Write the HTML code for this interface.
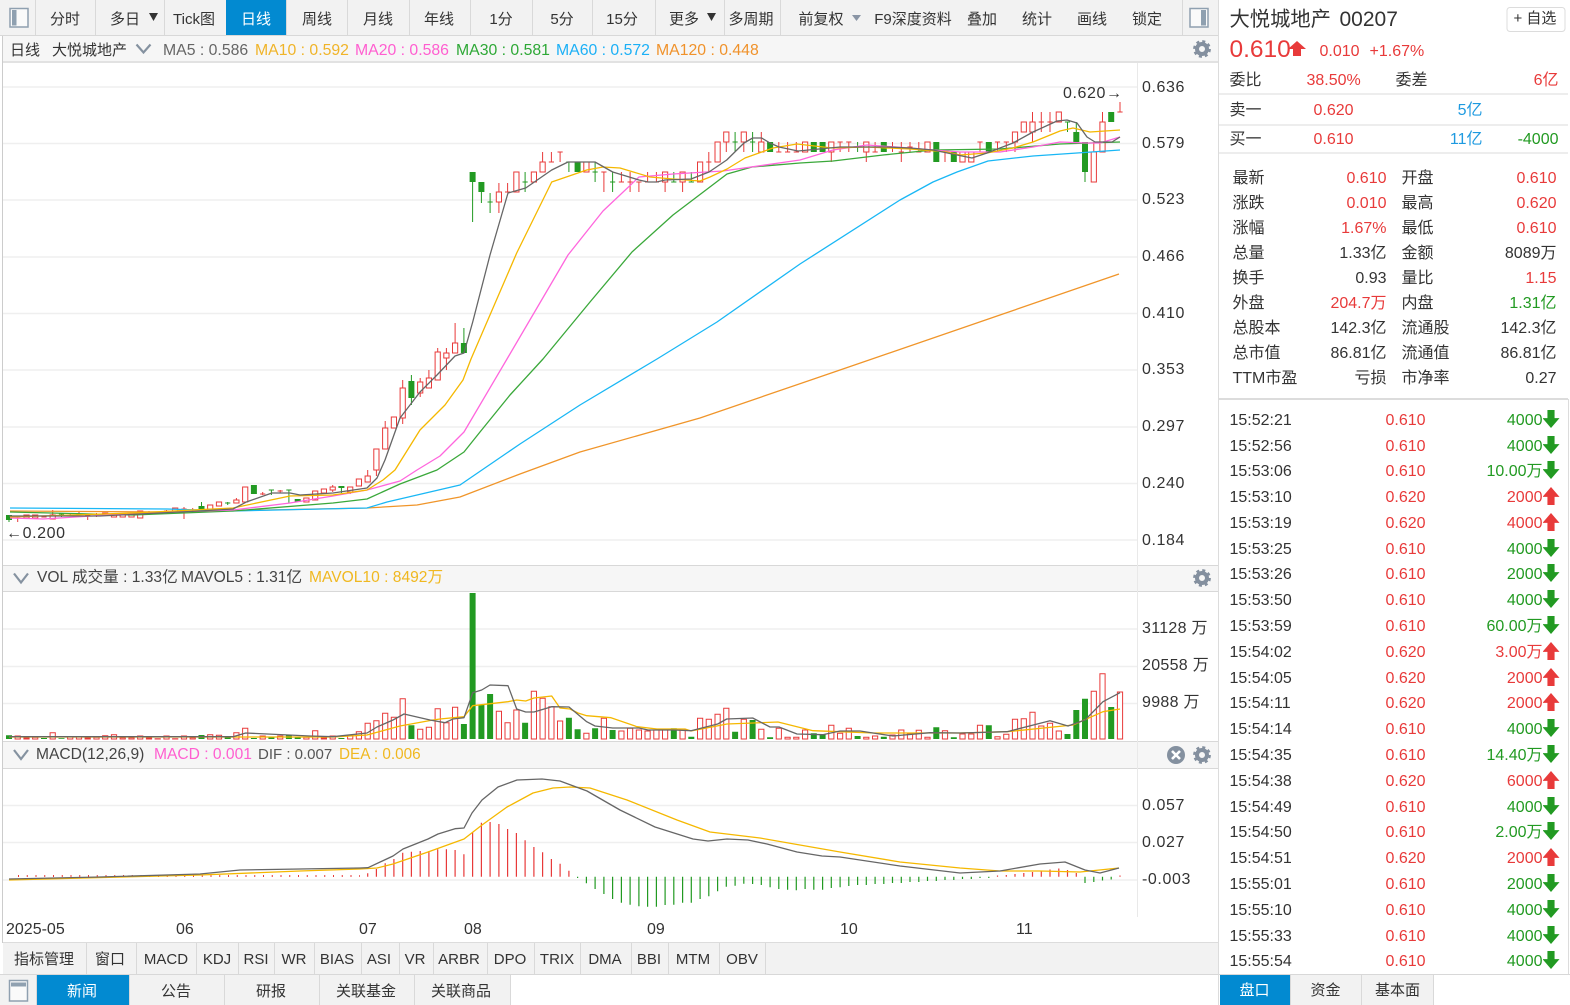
<!DOCTYPE html>
<html lang="zh"><head><meta charset="utf-8"><title>大悦城地产 00207</title>
<style>
*{margin:0;padding:0;box-sizing:border-box}
html,body{width:1570px;height:1005px;overflow:hidden;background:#fff}
body{position:relative;font:16px/20px "Liberation Sans","Noto Sans CJK SC",sans-serif;color:#333}
.box{position:absolute}
.t{position:absolute;white-space:nowrap;height:20px;line-height:20px;margin-top:2px}
.c{position:absolute;white-space:nowrap;text-align:center;height:20px;line-height:20px;width:100px;font-size:15px;margin-top:2px}
.rr{position:absolute;white-space:nowrap;text-align:right;height:20px;line-height:20px;width:100px;margin-top:2px}
.s{font-size:15px}
.v{font-size:15.6px}
.R{color:#e83a3a}.G{color:#229a22}.B{color:#1e9ae0}
.sep{position:absolute;width:1px;background:#d9d9d9}
.ar{position:absolute;left:1541px;width:17px;height:18px}
.ad{background:#229a22;clip-path:polygon(29% 0,71% 0,71% 45%,100% 45%,50% 100%,0 45%,29% 45%)}
.au{background:#e83a3a;clip-path:polygon(50% 0,100% 55%,71% 55%,71% 100%,29% 100%,29% 55%,0 55%)}
.wr{position:absolute;left:1.5px;top:0;width:1570px;height:1005px}
</style></head><body>
<!-- backgrounds -->
<div class="box" style="left:0;top:0;width:1218px;height:36px;background:#f2f2f2;border-bottom:1px solid #d8d8d8"></div>
<div class="box" style="left:3px;top:36px;width:1215px;height:27px;background:#f6f6f6;border-bottom:2px solid #e2e2e2"></div>
<div class="box" style="left:3px;top:565px;width:1215px;height:27px;background:#f6f6f6;border-top:1px solid #d8d8d8;border-bottom:1px solid #d8d8d8"></div>
<div class="box" style="left:3px;top:741px;width:1215px;height:28px;background:#f6f6f6;border-top:1px solid #d8d8d8;border-bottom:1px solid #d8d8d8"></div>
<div class="box" style="left:2px;top:36px;width:1px;height:907px;background:#ccc"></div>
<div class="box" style="left:3px;top:942px;width:1215px;height:33px;background:#f2f2f2;border-top:1px solid #dcdcdc;border-bottom:1px solid #d4d4d4"></div>
<div class="box" style="left:0;top:975px;width:510px;height:30px;background:#f2f2f2"></div>
<div class="box" style="left:226px;top:0;width:60px;height:35px;background:#028ad1"></div>
<div class="box" style="left:36px;top:975px;width:93px;height:30px;background:#028ad1"></div>
<div class="box" style="left:1218px;top:0;width:1px;height:1005px;background:#dcdcdc"></div>
<div class="box" style="left:1137px;top:63px;width:1px;height:854px;background:#e9e9e9"></div>
<div class="box" style="left:1219px;top:93px;width:349px;height:2px;background:#ededed"></div>
<div class="box" style="left:1219px;top:124px;width:349px;height:2px;background:#ededed"></div>
<div class="box" style="left:1219px;top:152px;width:349px;height:2px;background:#ededed"></div>
<div class="box" style="left:1219px;top:398px;width:349px;height:2px;background:#dcdcdc"></div>
<div class="box" style="left:1568px;top:399px;width:1px;height:576px;background:#dcdcdc"></div>
<div class="box" style="left:1219px;top:974px;width:351px;height:1px;background:#d8d8d8"></div>
<div class="box" style="left:0;top:974px;width:1218px;height:1px;background:#d8d8d8"></div>
<div class="box" style="left:1220px;top:975px;width:213px;height:30px;background:#f2f2f2"></div>
<div class="box" style="left:1220px;top:975px;width:70px;height:30px;background:#028ad1"></div>
<!-- separators -->
<div class="sep" style="left:35px;top:0;height:35px"></div><div class="sep" style="left:95px;top:0;height:35px"></div><div class="sep" style="left:164px;top:0;height:35px"></div><div class="sep" style="left:347px;top:0;height:35px"></div><div class="sep" style="left:409px;top:0;height:35px"></div><div class="sep" style="left:470px;top:0;height:35px"></div><div class="sep" style="left:532px;top:0;height:35px"></div><div class="sep" style="left:592px;top:0;height:35px"></div><div class="sep" style="left:655px;top:0;height:35px"></div><div class="sep" style="left:724px;top:0;height:35px"></div><div class="sep" style="left:780px;top:0;height:35px"></div><div class="sep" style="left:1182px;top:0;height:35px"></div><div class="sep" style="left:286px;top:0;height:35px"></div>
<div class="sep" style="left:86px;top:943px;height:31px"></div><div class="sep" style="left:136px;top:943px;height:31px"></div><div class="sep" style="left:196px;top:943px;height:31px"></div><div class="sep" style="left:238px;top:943px;height:31px"></div><div class="sep" style="left:274px;top:943px;height:31px"></div><div class="sep" style="left:314px;top:943px;height:31px"></div><div class="sep" style="left:361px;top:943px;height:31px"></div><div class="sep" style="left:399px;top:943px;height:31px"></div><div class="sep" style="left:433px;top:943px;height:31px"></div><div class="sep" style="left:487px;top:943px;height:31px"></div><div class="sep" style="left:534px;top:943px;height:31px"></div><div class="sep" style="left:580px;top:943px;height:31px"></div><div class="sep" style="left:631px;top:943px;height:31px"></div><div class="sep" style="left:668px;top:943px;height:31px"></div><div class="sep" style="left:719px;top:943px;height:31px"></div><div class="sep" style="left:765px;top:943px;height:31px"></div>
<div class="sep" style="left:129px;top:975px;height:30px"></div><div class="sep" style="left:224px;top:975px;height:30px"></div><div class="sep" style="left:319px;top:975px;height:30px"></div><div class="sep" style="left:414px;top:975px;height:30px"></div><div class="sep" style="left:510px;top:975px;height:30px"></div><div class="sep" style="left:36px;top:975px;height:30px"></div><div class="sep" style="left:1290px;top:975px;height:30px"></div><div class="sep" style="left:1361px;top:975px;height:30px"></div><div class="sep" style="left:1433px;top:975px;height:30px"></div>

<svg class="box" style="left:0;top:0" width="1570" height="1005" viewBox="0 0 1570 1005" fill="none">
<!-- grid -->
<path stroke="#efefef" stroke-width="1.5" d="M3 87H1137M3 143.5H1137M3 200H1137M3 257H1137M3 313.5H1137M3 370H1137M3 427H1137M3 483.5H1137M3 540H1137M3 629H1137M3 666.5H1137M3 703.5H1137M3 805.5H1137M3 842.5H1137M3 880H1137"/>
<!-- candle wicks -->
<path stroke="#e83a3a" d="M17.7 516V522M52.7 510V515M70.2 513V516M79 511V517M87.7 514V520M96.5 513V517M149 511V515M166.5 510V513M184 507V519M192.7 508V511M236.4 498V500M262.7 492V495M280.2 490V493M332.7 485V492M350.2 492V494M367.7 470V476M376.4 470V476M385.2 421V428M402.7 418V424M402.7 380V388M420.2 378V382M420.2 393V397M428.9 370V378M437.7 348V352M446.4 348V353M446.4 358V370M455.1 323V343M498.9 183V192M498.9 202V213M507.6 183V192M542.6 152V162M551.4 152V162M560.1 152V162M603.9 172V192M621.4 172V182M630.1 172V192M638.9 182V192M647.6 172V182M656.4 172V182M665.1 182V192M682.6 182V192M708.8 152V172M726.3 142V152M743.8 142V152M761.3 132V142M778.8 142V152M787.6 142V152M796.3 142V152M831.3 152V162M840.1 142V152M848.8 142V152M866.3 152V162M875.1 142V152M892.5 142V152M901.3 142V162M910 142V152M918.8 142V152M945 152V162M980 142V152M997.5 142V152M1006.3 142V152M1015 142V152M1032.5 112V122M1032.5 132V142M1041.3 112V132M1050 112V132M1093.8 142V152M1102.5 112V122M1120 102V112"/>
<path stroke="#e83a3a" d="M17.7 518m-2.6 0h5.2M44 517m-2.6 0h5.2M70.2 515m-2.6 0h5.2M79 514m-2.6 0h5.2M87.7 515m-2.6 0h5.2M96.5 514m-2.6 0h5.2M149 513m-2.6 0h5.2M157.7 512m-2.6 0h5.2M166.5 511m-2.6 0h5.2M184 509m-2.6 0h5.2M192.7 510m-2.6 0h5.2M262.7 494m-2.6 0h5.2M280.2 491m-2.6 0h5.2M507.6 192m-2.6 0h5.2M551.4 162m-2.6 0h5.2M560.1 152m-2.6 0h5.2M603.9 172m-2.6 0h5.2M621.4 182m-2.6 0h5.2M630.1 182m-2.6 0h5.2M638.9 182m-2.6 0h5.2M647.6 182m-2.6 0h5.2M656.4 182m-2.6 0h5.2M708.8 162m-2.6 0h5.2M778.8 152m-2.6 0h5.2M787.6 152m-2.6 0h5.2M796.3 152m-2.6 0h5.2M840.1 142m-2.6 0h5.2M848.8 142m-2.6 0h5.2M875.1 152m-2.6 0h5.2M892.5 147m-2.6 0h5.2M901.3 152m-2.6 0h5.2M910 147m-2.6 0h5.2M918.8 152m-2.6 0h5.2M945 152m-2.6 0h5.2M980 142m-2.6 0h5.2M997.5 142m-2.6 0h5.2M1006.3 142m-2.6 0h5.2M1041.3 122m-2.6 0h5.2M1050 122m-2.6 0h5.2M1120 112m-2.6 0h5.2"/>
<path stroke="#e83a3a" fill="#fff" d="M26.5 515m-2.6 0h5.2V518h-5.2zM35.2 515m-2.6 0h5.2V518h-5.2zM52.7 515m-2.6 0h5.2V519h-5.2zM105.2 513m-2.6 0h5.2V515.5h-5.2zM114 514m-2.6 0h5.2V517h-5.2zM122.7 514m-2.6 0h5.2V517h-5.2zM131.5 514m-2.6 0h5.2V517h-5.2zM140.2 511m-2.6 0h5.2V518h-5.2zM175.2 508m-2.6 0h5.2V512h-5.2zM210.2 505m-2.6 0h5.2V509h-5.2zM219 502m-2.6 0h5.2V506h-5.2zM236.4 500m-2.6 0h5.2V503h-5.2zM245.2 487m-2.6 0h5.2V502h-5.2zM306.4 498m-2.6 0h5.2V502h-5.2zM315.2 491m-2.6 0h5.2V500h-5.2zM323.9 489m-2.6 0h5.2V493h-5.2zM332.7 487m-2.6 0h5.2V490h-5.2zM350.2 487m-2.6 0h5.2V492h-5.2zM358.9 479m-2.6 0h5.2V486h-5.2zM367.7 476m-2.6 0h5.2V482h-5.2zM376.4 449m-2.6 0h5.2V470h-5.2zM385.2 428m-2.6 0h5.2V449h-5.2zM393.9 417m-2.6 0h5.2V428h-5.2zM402.7 388m-2.6 0h5.2V418h-5.2zM420.2 382m-2.6 0h5.2V393h-5.2zM428.9 378m-2.6 0h5.2V388h-5.2zM437.7 352m-2.6 0h5.2V380h-5.2zM446.4 353m-2.6 0h5.2V358h-5.2zM455.1 343m-2.6 0h5.2V353h-5.2zM498.9 192m-2.6 0h5.2V202h-5.2zM516.4 172m-2.6 0h5.2V192h-5.2zM533.9 172m-2.6 0h5.2V182h-5.2zM542.6 162m-2.6 0h5.2V172h-5.2zM586.4 162m-2.6 0h5.2V172h-5.2zM665.1 172m-2.6 0h5.2V182h-5.2zM682.6 172m-2.6 0h5.2V182h-5.2zM700.1 162m-2.6 0h5.2V182h-5.2zM717.6 142m-2.6 0h5.2V162h-5.2zM726.3 132m-2.6 0h5.2V142h-5.2zM743.8 132m-2.6 0h5.2V142h-5.2zM761.3 142m-2.6 0h5.2V152h-5.2zM805.1 142m-2.6 0h5.2V152h-5.2zM831.3 142m-2.6 0h5.2V152h-5.2zM866.3 142m-2.6 0h5.2V152h-5.2zM927.5 142m-2.6 0h5.2V152h-5.2zM962.5 152m-2.6 0h5.2V162h-5.2zM971.3 152m-2.6 0h5.2V162h-5.2zM1015 132m-2.6 0h5.2V142h-5.2zM1023.8 122m-2.6 0h5.2V132h-5.2zM1032.5 122m-2.6 0h5.2V132h-5.2zM1058.8 112m-2.6 0h5.2V122h-5.2zM1093.8 152m-2.6 0h5.2V182h-5.2zM1102.5 122m-2.6 0h5.2V152h-5.2z"/>
<path stroke="#229a22" d="M9 515V522M61.5 513V517M201.5 502V506M227.7 502V505M271.4 490V495M288.9 490V503M341.4 488V493M411.4 375V381M411.4 398V405M463.9 328V343M472.6 182V222M481.4 192V203M490.1 193V213M525.1 172V192M568.9 162V172M595.1 162V182M612.6 172V192M673.8 172V182M691.3 172V182M735.1 132V152M752.6 132V152M857.6 142V152M1067.5 122V132M1076.3 122V132M1085 172V182"/>
<path stroke="#229a22" d="M61.5 514m-2.6 0h5.2M227.7 503m-2.6 0h5.2M271.4 490m-2.6 0h5.2M288.9 490m-2.6 0h5.2M490.1 202m-2.6 0h5.2M525.1 182m-2.6 0h5.2M568.9 162m-2.6 0h5.2M595.1 172m-2.6 0h5.2M612.6 182m-2.6 0h5.2M673.8 182m-2.6 0h5.2M691.3 182m-2.6 0h5.2M735.1 142m-2.6 0h5.2M752.6 142m-2.6 0h5.2M857.6 147m-2.6 0h5.2M1067.5 122m-2.6 0h5.2"/>
<path stroke="#229a22" stroke-width="6" d="M9 515V520M201.5 506V509M253.9 485V494M297.7 499V502M341.4 486V488M411.4 381V398M463.9 343V353M472.6 172V182M481.4 182V192M577.6 162V172M770.1 142V152M813.8 142V152M822.6 142V152M883.8 142V152M936.3 142V162M953.8 152V162M988.8 142V152M1076.3 132V142M1085 142V172M1111.2 112V122"/>
<!-- MAs -->
<g stroke-width="1.3" stroke-linejoin="round">
<polyline stroke="#f0952a" points="10,511 167,512 367,508 417,505 460,497 520,474 580,452 700,418 840,370 1000,315 1119,274"/>
<polyline stroke="#19b7f5" points="10,508 167,509 233,511 367,508 387,502 460,485 520,444 580,405 657,359 717,322 800,264 900,200 933,182 957,172 988,161 1033,156 1077,153 1120,150"/>
<polyline stroke="#3aa83a" points="10,512 133,515 233,511 333,503 367,499 400,484 437,470 464,452 480,432 510,395 543,359 590,302 632,252 673,215 727,174 752,167 800,163 833,161 883,155 933,150 1000,149 1060,144 1120,142"/>
<polyline stroke="#ff66dd" points="10,518 43,519 140,513 233,510 290,503 333,496 367,490 400,481 417,470 440,456 464,432 507,359 568,255 603,211 639,177 673,174 723,171 800,160 833,150 867,145 910,148 933,150 960,152 1000,152 1033,147 1060,142 1087,143 1100,143 1120,137"/>
<polyline stroke="#f5b800" points="10,517 133,513 233,508 290,496 333,495 367,490 383,480 395,470 420,430 445,405 463,380 471,359 516.7,253 551.7,182 586.7,170 603,167 620,168 650,177 673,179 700,181 710,177 727,169 745,158 773,148 797,144 832,148 867,147 910,149 947,152 960,155 987,153 1013,148 1033,142 1060,131 1073,128 1090,132 1120,130"/>
<polyline stroke="#666" points="9,516 100,516 200,511 233,509 247,501.7 272,493 290,493 300,495 333,493 367,488 377,478 385,460 400,418 420,392 437,375 455,356 464,353 472.7,322 490,255 508,193 525.7,188 551.7,170 568,162 595,162 612.7,172 639,180 648,182 656.7,182 665,180 691,179 709,172 726.7,160 744,143 752.7,138 761.7,138 770,143 779,147 798,151 840,147 887,147 910,148 933,150 957,155 972,158 987,153 1013,143 1033,132 1057,121 1067,120 1077,123 1087,137 1095,142 1112,142 1120,137"/>
</g>
<!-- VOL bars -->
<path stroke="#e83a3a" fill="#fff" d="M17.7 736m-2.6 0h5.2V739h-5.2zM26.5 738m-2.6 0h5.2V739h-5.2zM35.2 737.3m-2.6 0h5.2V739h-5.2zM52.7 732.7m-2.6 0h5.2V739h-5.2zM70.2 736.7m-2.6 0h5.2V739h-5.2zM79 736.7m-2.6 0h5.2V739h-5.2zM87.7 738m-2.6 0h5.2V739h-5.2zM96.5 737.3m-2.6 0h5.2V739h-5.2zM105.2 735.7m-2.6 0h5.2V739h-5.2zM114 734.7m-2.6 0h5.2V739h-5.2zM122.7 737.7m-2.6 0h5.2V739h-5.2zM131.5 737.7m-2.6 0h5.2V739h-5.2zM140.2 736m-2.6 0h5.2V739h-5.2zM149 738m-2.6 0h5.2V739h-5.2zM157.7 738.7m-2.6 0h5.2V739h-5.2zM166.5 736m-2.6 0h5.2V739h-5.2zM175.2 738.7m-2.6 0h5.2V739h-5.2zM184 736m-2.6 0h5.2V739h-5.2zM192.7 737.7m-2.6 0h5.2V739h-5.2zM210.2 734.7m-2.6 0h5.2V739h-5.2zM219 735.3m-2.6 0h5.2V739h-5.2zM236.4 732.7m-2.6 0h5.2V739h-5.2zM245.2 728.3m-2.6 0h5.2V739h-5.2zM262.7 736m-2.6 0h5.2V739h-5.2zM280.2 736m-2.6 0h5.2V739h-5.2zM306.4 737.3m-2.6 0h5.2V739h-5.2zM315.2 730.7m-2.6 0h5.2V739h-5.2zM323.9 738m-2.6 0h5.2V739h-5.2zM332.7 736m-2.6 0h5.2V739h-5.2zM350.2 735m-2.6 0h5.2V739h-5.2zM358.9 731.7m-2.6 0h5.2V739h-5.2zM367.7 723.3m-2.6 0h5.2V739h-5.2zM376.4 720.7m-2.6 0h5.2V739h-5.2zM385.2 713.3m-2.6 0h5.2V739h-5.2zM393.9 717.3m-2.6 0h5.2V739h-5.2zM402.7 698.7m-2.6 0h5.2V739h-5.2zM420.2 729.3m-2.6 0h5.2V739h-5.2zM428.9 727.3m-2.6 0h5.2V739h-5.2zM437.7 708.7m-2.6 0h5.2V739h-5.2zM446.4 722.7m-2.6 0h5.2V739h-5.2zM455.1 707.3m-2.6 0h5.2V739h-5.2zM498.9 711.3m-2.6 0h5.2V739h-5.2zM507.6 722.7m-2.6 0h5.2V739h-5.2zM516.4 710m-2.6 0h5.2V739h-5.2zM533.9 691.3m-2.6 0h5.2V739h-5.2zM542.6 698.3m-2.6 0h5.2V739h-5.2zM551.4 706.7m-2.6 0h5.2V739h-5.2zM560.1 721m-2.6 0h5.2V739h-5.2zM586.4 733.3m-2.6 0h5.2V739h-5.2zM603.9 718.3m-2.6 0h5.2V739h-5.2zM621.4 731m-2.6 0h5.2V739h-5.2zM630.1 728.3m-2.6 0h5.2V739h-5.2zM638.9 730m-2.6 0h5.2V739h-5.2zM647.6 731m-2.6 0h5.2V739h-5.2zM656.4 730m-2.6 0h5.2V739h-5.2zM665.1 730m-2.6 0h5.2V739h-5.2zM682.6 729.3m-2.6 0h5.2V739h-5.2zM700.1 718.3m-2.6 0h5.2V739h-5.2zM708.8 719.3m-2.6 0h5.2V739h-5.2zM717.6 714.3m-2.6 0h5.2V739h-5.2zM726.3 708.3m-2.6 0h5.2V739h-5.2zM743.8 719.3m-2.6 0h5.2V739h-5.2zM761.3 729.3m-2.6 0h5.2V739h-5.2zM778.8 728.3m-2.6 0h5.2V739h-5.2zM787.6 737.3m-2.6 0h5.2V739h-5.2zM796.3 737.3m-2.6 0h5.2V739h-5.2zM805.1 730m-2.6 0h5.2V739h-5.2zM831.3 725.3m-2.6 0h5.2V739h-5.2zM840.1 733.3m-2.6 0h5.2V739h-5.2zM848.8 728.3m-2.6 0h5.2V739h-5.2zM866.3 737.3m-2.6 0h5.2V739h-5.2zM875.1 736m-2.6 0h5.2V739h-5.2zM892.5 735m-2.6 0h5.2V739h-5.2zM901.3 730m-2.6 0h5.2V739h-5.2zM910 734m-2.6 0h5.2V739h-5.2zM918.8 730.3m-2.6 0h5.2V739h-5.2zM927.5 737.3m-2.6 0h5.2V739h-5.2zM945 730.7m-2.6 0h5.2V739h-5.2zM962.5 734m-2.6 0h5.2V739h-5.2zM971.3 734m-2.6 0h5.2V739h-5.2zM980 725.3m-2.6 0h5.2V739h-5.2zM997.5 736.7m-2.6 0h5.2V739h-5.2zM1006.3 734.3m-2.6 0h5.2V739h-5.2zM1015 719.3m-2.6 0h5.2V739h-5.2zM1023.8 718.7m-2.6 0h5.2V739h-5.2zM1032.5 712.3m-2.6 0h5.2V739h-5.2zM1041.3 726m-2.6 0h5.2V739h-5.2zM1050 723.3m-2.6 0h5.2V739h-5.2zM1058.8 731m-2.6 0h5.2V739h-5.2zM1093.8 691.3m-2.6 0h5.2V739h-5.2zM1102.5 673.7m-2.6 0h5.2V739h-5.2zM1120 692m-2.6 0h5.2V739h-5.2z"/>
<path stroke="#229a22" stroke-width="6" d="M9 735.3V739M44 738V739M61.5 738.3V739M201.5 735V739M227.7 736V739M253.9 738V739M271.4 736.7V739M288.9 735V739M297.7 736.7V739M341.4 738V739M411.4 725.3V739M463.9 724V739M472.6 593V739M481.4 705V739M490.1 694V739M525.1 722.7V739M568.9 717.7V739M577.6 729.3V739M595.1 728.3V739M612.6 730V739M673.8 728.3V739M691.3 736.7V739M735.1 731.7V739M752.6 720V739M770.1 737.3V739M813.8 733.3V739M822.6 734.3V739M857.6 736V739M883.8 736.7V739M936.3 727.3V739M953.8 737.3V739M988.8 725.3V739M1067.5 734V739M1076.3 710V739M1085 698.7V739M1111.2 707V739"/>
<g stroke-width="1.3" stroke-linejoin="round">
<polyline stroke="#f5b800" points="9,737 333,737 367,735 400,726 433,720 440,719 464,716.7 472.7,705.7 508,701.7 516.7,700 525.7,701 534,698 551.7,696 560,708 570,709 578,713 586.7,715.7 611,717.7 637,726.7 657,729 685,729 691,731 727,724 778,722 813,730.7 840,731.7 873,733 960,733 1007,731.7 1073,725 1103,711.7 1120,709"/>
<polyline stroke="#666" points="9,736.7 233,736.7 245.7,733 310,736 333,736.7 367,733 377,727 393,720 404,714 430,720 445,722.7 453,719 464,717.7 472.7,692.7 481.7,690 490,685 508,685.7 516.7,709 525.7,712 534,712 551.7,706.7 569,707 586.7,721.7 595,726 612.7,728 639,728 648,730 674,730 691,730.7 717.7,724 726.7,719 752.7,718 770,727 779,727 797,734 822.7,734.7 840,731 860,731 873,733 893,736 930,732.7 960,733 1007,731.7 1050,720.7 1068,726 1085,720 1103,701.7 1120,692.7"/>
</g>
<!-- MACD bars -->
<path stroke="#e83a3a" stroke-width="2" stroke-dasharray="1 7.75" d="M18 876H360"/>
<path stroke="#e83a3a" stroke-width="1.2" d="M367.7 876.7V873.3M376.4 876.7V869M385.2 876.7V863.3M393.9 876.7V859M402.7 876.7V852.7M411.4 876.7V851.7M420.2 876.7V851M428.9 876.7V851M437.7 876.7V849.3M446.4 876.7V849.3M455.1 876.7V850M463.9 876.7V854.3M472.6 876.7V832.3M481.4 876.7V822.7M490.1 876.7V822M498.9 876.7V824M507.6 876.7V829M516.4 876.7V833M525.1 876.7V840.3M533.9 876.7V847M542.6 876.7V852.3M551.4 876.7V859M560.1 876.7V863.7M568.9 876.7V870.7M997.5 876.7V875.5M1006.3 876.7V875M1015 876.7V874M1023.8 876.7V873M1032.5 876.7V872M1041.3 876.7V871M1050 876.7V869.5M1058.8 876.7V868.5M1067.5 876.7V870M1076.3 876.7V873M1120 876.7V875.5"/>
<path stroke="#229a22" stroke-width="1.2" d="M577.6 876.7V878M586.4 876.7V883.3M595.1 876.7V889M603.9 876.7V894M612.6 876.7V899M621.4 876.7V902.7M630.1 876.7V904.7M638.9 876.7V906.3M647.6 876.7V906.7M656.4 876.7V906.7M665.1 876.7V905M673.8 876.7V904.7M682.6 876.7V902.7M691.3 876.7V902.7M700.1 876.7V899M708.8 876.7V896.3M717.6 876.7V891.3M726.3 876.7V886.7M735.1 876.7V885.7M743.8 876.7V883.7M752.6 876.7V884M761.3 876.7V885M770.1 876.7V887.3M778.8 876.7V889M787.6 876.7V889.7M796.3 876.7V890.3M805.1 876.7V889M813.8 876.7V889.7M822.6 876.7V889.7M831.3 876.7V888M840.1 876.7V887.3M848.8 876.7V886M857.6 876.7V885M866.3 876.7V885M875.1 876.7V884M883.8 876.7V884M892.5 876.7V883M901.3 876.7V883M910 876.7V882M918.8 876.7V882M927.5 876.7V881M936.3 876.7V881M945 876.7V880M953.8 876.7V880M962.5 876.7V879M971.3 876.7V879M980 876.7V878M988.8 876.7V878M1085 876.7V883M1093.8 876.7V882M1102.5 876.7V880.5M1111.2 876.7V879.5"/>
<g stroke-width="1.3" stroke-linejoin="round">
<polyline stroke="#f5b800" points="9,880 200,875 300,871 360,869 377,868 393,864 428,852 464,839 482,825 507,807 533,793 553,788 570,787 590,788 627,800 677,820 710,832 760,838 840,852 900,862 960,868 1000,871 1040,871 1080,872 1119,868"/>
<polyline stroke="#666" points="9,879 100,877 200,874 240,870 300,869 360,868 368,867.7 393,856 403,849 428,839 438,834 455,828.7 464,828 472,813 482,800 498,787 517,780 542,779 560,781 587,791 620,810 655,827 693,839 708,841 727,839 748,840 767,844 797,852 822,856 840,857 900,866 960,873 1000,871 1040,864 1065,862 1085,870 1100,873 1119,868"/>
</g>
<!-- toolbar triangles -->
<path fill="#333" d="M149 13h9l-4.500 8zM707 13h9l-4.500 8z"/>
<path fill="#8a95a5" d="M852 15h9l-4.500 6z"/>
<!-- panel icons -->
<g stroke="#8fa0b0" stroke-width="1.5" fill="#fafafa">
<rect x="10" y="8.500" width="18" height="18.500"/><rect x="1190" y="8.500" width="18" height="18.500"/><rect x="9.500" y="980.500" width="18" height="20.500"/>
</g>
<path fill="#8fa0b0" d="M12 10h4.500v15.500H12zM1201 10h5v15.500h-5zM11 982.500h15v4H11z"/>
<!-- chevrons -->
<path stroke="#8592a0" stroke-width="2.2" d="M136.500 44.500l7 8 7-8M14 573.500l7 9 7-9M14 750l7 9 7-9"/>
<!-- gears -->
<g stroke="#84909f">
<circle cx="1202" cy="49" r="5" stroke-width="4"/><circle cx="1202" cy="49" r="7.600" stroke-width="2.600" stroke-dasharray="3 2.970"/>
<circle cx="1202" cy="578" r="5" stroke-width="4"/><circle cx="1202" cy="578" r="7.600" stroke-width="2.600" stroke-dasharray="3 2.970"/>
<circle cx="1202" cy="755" r="5" stroke-width="4"/><circle cx="1202" cy="755" r="7.600" stroke-width="2.600" stroke-dasharray="3 2.970"/>
</g>
<circle cx="1176" cy="755" r="9" fill="#84909f"/>
<path stroke="#fff" stroke-width="2.600" d="M1172 751l8 8M1180 751l-8 8"/>
<!-- + button -->
<rect x="1507" y="7.500" width="58" height="24" rx="3" stroke="#dcdcdc" fill="#fff"/>
<!-- price up arrow -->
<path fill="#e83a3a" d="M1297 41l9 8h-5v7h-8v-7h-5z"/>
</svg>

<!-- top toolbar labels -->
<div class="c" style="left:15px;top:8px">分时</div>
<div class="c" style="left:75px;top:8px">多日</div>
<div class="c" style="left:144px;top:8px">Tick图</div>
<div class="c" style="left:206px;top:8px;color:#fff">日线</div>
<div class="c" style="left:267px;top:8px">周线</div>
<div class="c" style="left:328px;top:8px">月线</div>
<div class="c" style="left:389px;top:8px">年线</div>
<div class="c" style="left:451px;top:8px">1分</div>
<div class="c" style="left:512px;top:8px">5分</div>
<div class="c" style="left:572px;top:8px">15分</div>
<div class="c" style="left:634px;top:8px">更多</div>
<div class="c" style="left:701px;top:8px">多周期</div>
<div class="c" style="left:771px;top:8px">前复权</div>
<div class="c" style="left:863px;top:8px">F9深度资料</div>
<div class="c" style="left:932px;top:8px">叠加</div>
<div class="c" style="left:987px;top:8px">统计</div>
<div class="c" style="left:1042px;top:8px">画线</div>
<div class="c" style="left:1097px;top:8px">锁定</div>

<!-- K header -->
<div class="t s" style="left:10px;top:39px">日线</div>
<div class="t s" style="left:52px;top:39px">大悦城地产</div>
<div class="t" style="left:163px;top:39px;font-size:15.8px;color:#666">MA5 : 0.586</div>
<div class="t" style="left:255px;top:39px;font-size:15.8px;color:#f0b429">MA10 : 0.592</div>
<div class="t" style="left:355px;top:39px;font-size:15.8px;color:#ff5ed0">MA20 : 0.586</div>
<div class="t" style="left:456px;top:39px;font-size:15.8px;color:#2ea836">MA30 : 0.581</div>
<div class="t" style="left:556px;top:39px;font-size:15.8px;color:#1cb0f6">MA60 : 0.572</div>
<div class="t" style="left:656px;top:39px;font-size:15.8px;color:#f0922b">MA120 : 0.448</div>
<!-- VOL header -->
<div class="t v" style="left:37px;top:566px;color:#444">VOL 成交量 : 1.33亿</div>
<div class="t v" style="left:181px;top:566px;color:#444">MAVOL5 : 1.31亿</div>
<div class="t v" style="left:309px;top:566px;color:#f0b820">MAVOL10 : 8492万</div>
<!-- MACD header -->
<div class="t v" style="left:36px;top:743px;color:#444">MACD(12,26,9)</div>
<div class="t v" style="left:154px;top:743px;color:#ff5ed0">MACD : 0.001</div>
<div class="t s" style="left:258px;top:743px;color:#555">DIF : 0.007</div>
<div class="t" style="left:339px;top:743px;font-size:15.3px;color:#f0b820">DEA : 0.006</div>

<!-- axis -->
<div class="t" style="left:1142px;top:76px;letter-spacing:.6px">0.636</div>
<div class="t" style="left:1142px;top:132px;letter-spacing:.6px">0.579</div>
<div class="t" style="left:1142px;top:188px;letter-spacing:.6px">0.523</div>
<div class="t" style="left:1142px;top:245px;letter-spacing:.6px">0.466</div>
<div class="t" style="left:1142px;top:302px;letter-spacing:.6px">0.410</div>
<div class="t" style="left:1142px;top:358px;letter-spacing:.6px">0.353</div>
<div class="t" style="left:1142px;top:415px;letter-spacing:.6px">0.297</div>
<div class="t" style="left:1142px;top:472px;letter-spacing:.6px">0.240</div>
<div class="t" style="left:1142px;top:529px;letter-spacing:.6px">0.184</div>
<div class="t" style="left:1142px;top:617px;letter-spacing:.3px">31128 万</div>
<div class="t" style="left:1142px;top:654px;letter-spacing:.3px">20558 万</div>
<div class="t" style="left:1142px;top:691px;letter-spacing:.3px">9988 万</div>
<div class="t" style="left:1142px;top:794px;letter-spacing:.6px">0.057</div>
<div class="t" style="left:1142px;top:831px;letter-spacing:.6px">0.027</div>
<div class="t" style="left:1142px;top:868px;letter-spacing:.6px">-0.003</div>
<div class="t" style="left:1063px;top:82px;letter-spacing:.6px">0.620→</div>
<div class="t" style="left:6px;top:522px;letter-spacing:.6px">←0.200</div>
<!-- x axis -->
<div class="t" style="left:6px;top:918px">2025-05</div>
<div class="t" style="left:176px;top:918px">06</div>
<div class="t" style="left:359px;top:918px">07</div>
<div class="t" style="left:464px;top:918px">08</div>
<div class="t" style="left:647px;top:918px">09</div>
<div class="t" style="left:840px;top:918px">10</div>
<div class="t" style="left:1016px;top:918px">11</div>
<!-- index toolbar -->
<div class="c" style="left:-6px;top:948px">指标管理</div>
<div class="c" style="left:60px;top:948px">窗口</div>
<div class="c" style="left:116px;top:948px">MACD</div>
<div class="c" style="left:167px;top:948px">KDJ</div>
<div class="c" style="left:206px;top:948px">RSI</div>
<div class="c" style="left:244px;top:948px">WR</div>
<div class="c" style="left:287px;top:948px">BIAS</div>
<div class="c" style="left:329px;top:948px">ASI</div>
<div class="c" style="left:365px;top:948px">VR</div>
<div class="c" style="left:409px;top:948px">ARBR</div>
<div class="c" style="left:460px;top:948px">DPO</div>
<div class="c" style="left:507px;top:948px">TRIX</div>
<div class="c" style="left:555px;top:948px">DMA</div>
<div class="c" style="left:599px;top:948px">BBI</div>
<div class="c" style="left:643px;top:948px">MTM</div>
<div class="c" style="left:692px;top:948px">OBV</div>
<!-- bottom tabs -->
<div class="c" style="left:32px;top:980px;color:#fff">新闻</div>
<div class="c" style="left:126px;top:980px">公告</div>
<div class="c" style="left:221px;top:980px">研报</div>
<div class="c" style="left:316px;top:980px">关联基金</div>
<div class="c" style="left:411px;top:980px">关联商品</div>

<div class="wr">
<div class="c" style="left:1203px;top:979px;color:#fff">盘口</div>
<div class="c" style="left:1274px;top:979px">资金</div>
<div class="c" style="left:1346px;top:979px">基本面</div>
<!-- right panel head -->
<div class="t" style="left:1228px;top:8px;font-size:20.3px">大悦城地产</div>
<div class="t" style="left:1338px;top:8px;font-size:21px">00207</div>
<div class="t" style="left:1512px;top:7px;font-size:15px">+ 自选</div>
<div class="t R" style="left:1228px;top:38px;font-size:24.5px">0.610</div>
<div class="t R" style="left:1318px;top:40px">0.010</div>
<div class="t R" style="left:1368px;top:40px">+1.67%</div>
<div class="t" style="left:1228px;top:69px">委比</div>
<div class="t R" style="left:1305px;top:69px">38.50%</div>
<div class="t" style="left:1394px;top:69px">委差</div>
<div class="rr R" style="left:1457px;top:69px">6亿</div>
<div class="t" style="left:1228px;top:99px">卖一</div>
<div class="t R" style="left:1312px;top:99px">0.620</div>
<div class="rr B" style="left:1381px;top:99px">5亿</div>
<div class="t" style="left:1228px;top:128px">买一</div>
<div class="t R" style="left:1312px;top:128px">0.610</div>
<div class="rr B" style="left:1381px;top:128px">11亿</div>
<div class="rr G" style="left:1457px;top:128px">-4000</div>

<!-- stats -->
<div class="t" style="left:1231px;top:167px">最新</div><div class="rr R" style="left:1285px;top:167px">0.610</div><div class="t" style="left:1400px;top:167px">开盘</div><div class="rr R" style="left:1455px;top:167px">0.610</div>
<div class="t" style="left:1231px;top:192px">涨跌</div><div class="rr R" style="left:1285px;top:192px">0.010</div><div class="t" style="left:1400px;top:192px">最高</div><div class="rr R" style="left:1455px;top:192px">0.620</div>
<div class="t" style="left:1231px;top:217px">涨幅</div><div class="rr R" style="left:1285px;top:217px">1.67%</div><div class="t" style="left:1400px;top:217px">最低</div><div class="rr R" style="left:1455px;top:217px">0.610</div>
<div class="t" style="left:1231px;top:242px">总量</div><div class="rr" style="left:1285px;top:242px">1.33亿</div><div class="t" style="left:1400px;top:242px">金额</div><div class="rr" style="left:1455px;top:242px">8089万</div>
<div class="t" style="left:1231px;top:267px">换手</div><div class="rr" style="left:1285px;top:267px">0.93</div><div class="t" style="left:1400px;top:267px">量比</div><div class="rr R" style="left:1455px;top:267px">1.15</div>
<div class="t" style="left:1231px;top:292px">外盘</div><div class="rr R" style="left:1285px;top:292px">204.7万</div><div class="t" style="left:1400px;top:292px">内盘</div><div class="rr G" style="left:1455px;top:292px">1.31亿</div>
<div class="t" style="left:1231px;top:317px">总股本</div><div class="rr" style="left:1285px;top:317px">142.3亿</div><div class="t" style="left:1400px;top:317px">流通股</div><div class="rr" style="left:1455px;top:317px">142.3亿</div>
<div class="t" style="left:1231px;top:342px">总市值</div><div class="rr" style="left:1285px;top:342px">86.81亿</div><div class="t" style="left:1400px;top:342px">流通值</div><div class="rr" style="left:1455px;top:342px">86.81亿</div>
<div class="t" style="left:1231px;top:367px">TTM市盈</div><div class="rr" style="left:1285px;top:367px">亏损</div><div class="t" style="left:1400px;top:367px">市净率</div><div class="rr" style="left:1455px;top:367px">0.27</div>

<!-- trades -->
<div class="t" style="left:1228px;top:409px">15:52:21</div><div class="t R" style="left:1384px;top:409px">0.610</div><div class="rr G" style="left:1441px;top:409px">4000</div><div class="ar ad" style="top:410px"></div>
<div class="t" style="left:1228px;top:435px">15:52:56</div><div class="t R" style="left:1384px;top:435px">0.610</div><div class="rr G" style="left:1441px;top:435px">4000</div><div class="ar ad" style="top:436px"></div>
<div class="t" style="left:1228px;top:460px">15:53:06</div><div class="t R" style="left:1384px;top:460px">0.610</div><div class="rr G" style="left:1441px;top:460px">10.00万</div><div class="ar ad" style="top:461px"></div>
<div class="t" style="left:1228px;top:486px">15:53:10</div><div class="t R" style="left:1384px;top:486px">0.620</div><div class="rr R" style="left:1441px;top:486px">2000</div><div class="ar au" style="top:487px"></div>
<div class="t" style="left:1228px;top:512px">15:53:19</div><div class="t R" style="left:1384px;top:512px">0.620</div><div class="rr R" style="left:1441px;top:512px">4000</div><div class="ar au" style="top:513px"></div>
<div class="t" style="left:1228px;top:538px">15:53:25</div><div class="t R" style="left:1384px;top:538px">0.610</div><div class="rr G" style="left:1441px;top:538px">4000</div><div class="ar ad" style="top:539px"></div>
<div class="t" style="left:1228px;top:563px">15:53:26</div><div class="t R" style="left:1384px;top:563px">0.610</div><div class="rr G" style="left:1441px;top:563px">2000</div><div class="ar ad" style="top:564px"></div>
<div class="t" style="left:1228px;top:589px">15:53:50</div><div class="t R" style="left:1384px;top:589px">0.610</div><div class="rr G" style="left:1441px;top:589px">4000</div><div class="ar ad" style="top:590px"></div>
<div class="t" style="left:1228px;top:615px">15:53:59</div><div class="t R" style="left:1384px;top:615px">0.610</div><div class="rr G" style="left:1441px;top:615px">60.00万</div><div class="ar ad" style="top:616px"></div>
<div class="t" style="left:1228px;top:641px">15:54:02</div><div class="t R" style="left:1384px;top:641px">0.620</div><div class="rr R" style="left:1441px;top:641px">3.00万</div><div class="ar au" style="top:642px"></div>
<div class="t" style="left:1228px;top:667px">15:54:05</div><div class="t R" style="left:1384px;top:667px">0.620</div><div class="rr R" style="left:1441px;top:667px">2000</div><div class="ar au" style="top:668px"></div>
<div class="t" style="left:1228px;top:692px">15:54:11</div><div class="t R" style="left:1384px;top:692px">0.620</div><div class="rr R" style="left:1441px;top:692px">2000</div><div class="ar au" style="top:693px"></div>
<div class="t" style="left:1228px;top:718px">15:54:14</div><div class="t R" style="left:1384px;top:718px">0.610</div><div class="rr G" style="left:1441px;top:718px">4000</div><div class="ar ad" style="top:719px"></div>
<div class="t" style="left:1228px;top:744px">15:54:35</div><div class="t R" style="left:1384px;top:744px">0.610</div><div class="rr G" style="left:1441px;top:744px">14.40万</div><div class="ar ad" style="top:745px"></div>
<div class="t" style="left:1228px;top:770px">15:54:38</div><div class="t R" style="left:1384px;top:770px">0.620</div><div class="rr R" style="left:1441px;top:770px">6000</div><div class="ar au" style="top:771px"></div>
<div class="t" style="left:1228px;top:796px">15:54:49</div><div class="t R" style="left:1384px;top:796px">0.610</div><div class="rr G" style="left:1441px;top:796px">4000</div><div class="ar ad" style="top:797px"></div>
<div class="t" style="left:1228px;top:821px">15:54:50</div><div class="t R" style="left:1384px;top:821px">0.610</div><div class="rr G" style="left:1441px;top:821px">2.00万</div><div class="ar ad" style="top:822px"></div>
<div class="t" style="left:1228px;top:847px">15:54:51</div><div class="t R" style="left:1384px;top:847px">0.620</div><div class="rr R" style="left:1441px;top:847px">2000</div><div class="ar au" style="top:848px"></div>
<div class="t" style="left:1228px;top:873px">15:55:01</div><div class="t R" style="left:1384px;top:873px">0.610</div><div class="rr G" style="left:1441px;top:873px">2000</div><div class="ar ad" style="top:874px"></div>
<div class="t" style="left:1228px;top:899px">15:55:10</div><div class="t R" style="left:1384px;top:899px">0.610</div><div class="rr G" style="left:1441px;top:899px">4000</div><div class="ar ad" style="top:900px"></div>
<div class="t" style="left:1228px;top:925px">15:55:33</div><div class="t R" style="left:1384px;top:925px">0.610</div><div class="rr G" style="left:1441px;top:925px">4000</div><div class="ar ad" style="top:926px"></div>
<div class="t" style="left:1228px;top:950px">15:55:54</div><div class="t R" style="left:1384px;top:950px">0.610</div><div class="rr G" style="left:1441px;top:950px">4000</div><div class="ar ad" style="top:951px"></div>
</div>
</body></html>
